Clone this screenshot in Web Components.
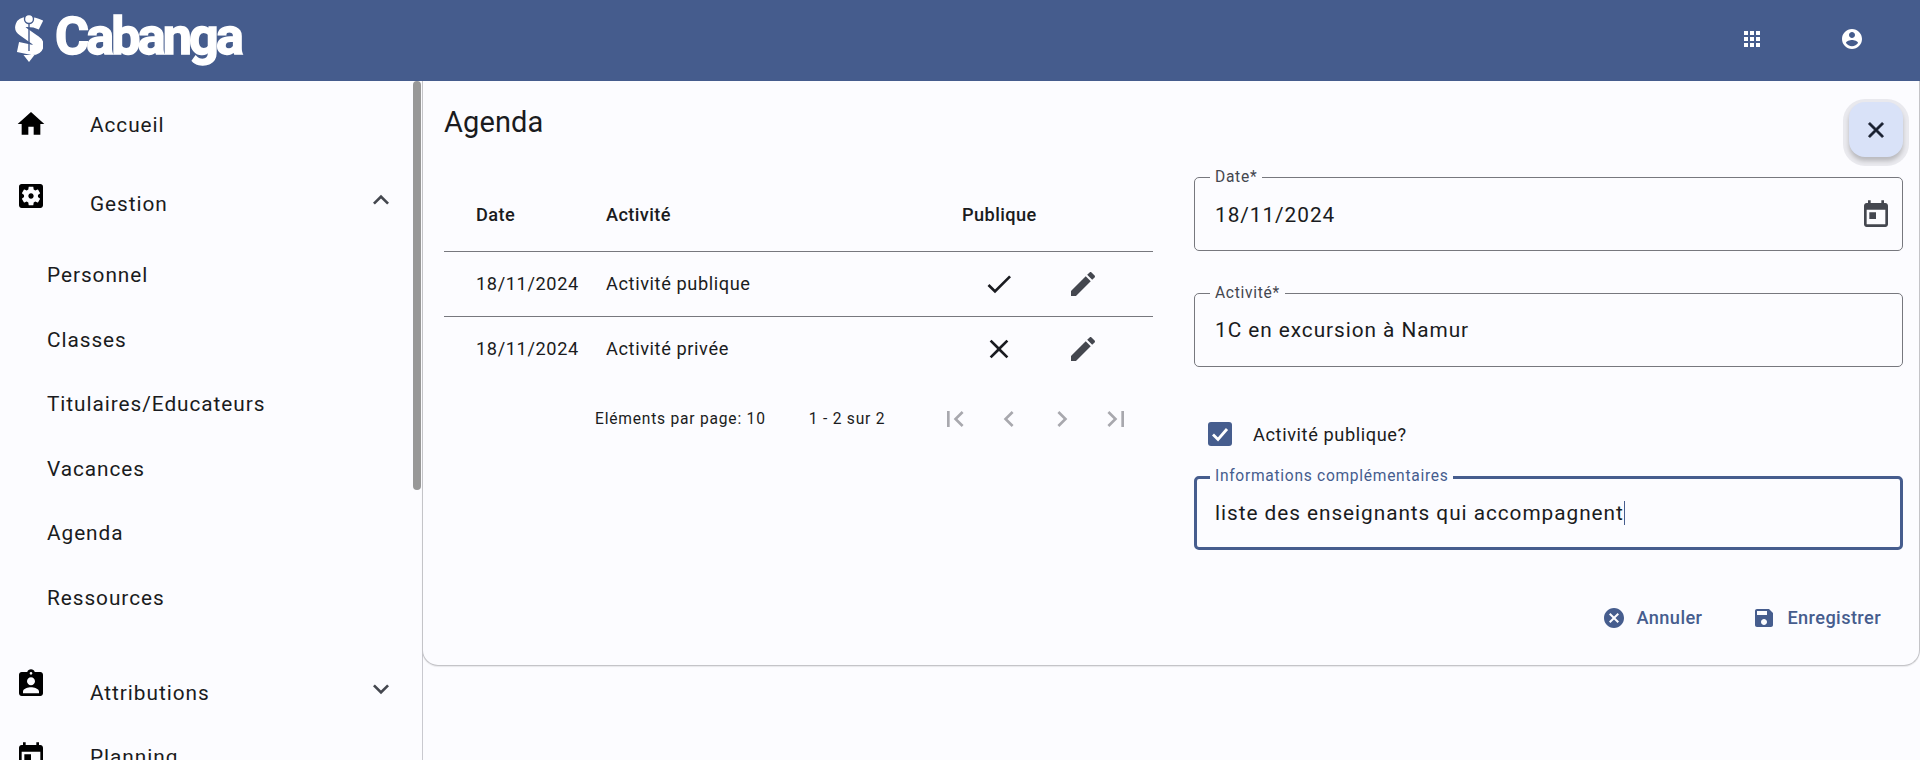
<!DOCTYPE html>
<html lang="fr">
<head>
<meta charset="utf-8">
<title>Cabanga - Agenda</title>
<style>
  html, body { margin: 0; height: 100%; overflow: hidden; background: #fcfcff; }
  body { font-family: Roboto, "Liberation Sans", sans-serif; color: #1a1b20; display: flex; flex-direction: column; }
  .main { flex: 1; display: flex; min-height: 0; }
</style>
</head>
<body>
<app-header></app-header>
<div class="main">
  <side-nav>
    <nav-item label="Accueil" icon="home" style="margin-top:12px" icon-shift="-1"></nav-item>
    <nav-item label="Gestion" icon="settings" chevron="less" style="margin-top:15px" icon-shift="-8"></nav-item>
    <nav-item label="Personnel" sub style="margin-top:7px"></nav-item>
    <nav-item label="Classes" sub></nav-item>
    <nav-item label="Titulaires/Educateurs" sub></nav-item>
    <nav-item label="Vacances" sub></nav-item>
    <nav-item label="Agenda" sub></nav-item>
    <nav-item label="Ressources" sub></nav-item>
    <nav-item label="Attributions" icon="badge" chevron="more" style="margin-top:31px" icon-shift="-9"></nav-item>
    <nav-item label="Planning" icon="today"></nav-item>
  </side-nav>
  <agenda-card>
    <agenda-table slot="left"></agenda-table>
    <agenda-form slot="right"></agenda-form>
  </agenda-card>
</div>

<script>
const ICONS = {
    home: 'M10 20v-6h4v6h5v-8h3L12 3 2 12h3v8z',
    settings: 'M12 10c-1.1 0-2 .9-2 2s.9 2 2 2 2-.9 2-2-.9-2-2-2zm7-7H5c-1.11 0-2 .89-2 2v14c0 1.11.89 2 2 2h14c1.11 0 2-.89 2-2V5c0-1.11-.89-2-2-2zm-1.75 9c0 .23-.02.46-.05.68l1.48 1.16c.13.11.17.3.08.45l-1.4 2.42c-.09.15-.27.21-.43.15l-1.74-.7c-.36.28-.76.51-1.18.69l-.26 1.85c-.03.17-.18.3-.35.3h-2.8c-.17 0-.32-.13-.35-.29l-.26-1.85c-.43-.18-.82-.41-1.18-.69l-1.74.7c-.16.06-.34 0-.43-.15l-1.4-2.42c-.09-.15-.05-.34.08-.45l1.48-1.16c-.03-.23-.05-.46-.05-.69 0-.23.02-.46.05-.68l-1.48-1.16c-.13-.11-.17-.3-.08-.45l1.4-2.42c.09-.15.27-.21.43-.15l1.74.7c.36-.28.76-.51 1.18-.69l.26-1.85c.03-.17.18-.3.35-.3h2.8c.17 0 .32.13.35.29l.26 1.85c.43.18.82.41 1.18.69l1.74-.7c.16-.06.34 0 .43.15l1.4 2.42c.09.15.05.34-.08.45l-1.48 1.16c.03.23.05.46.05.69z',
    badge: 'M19 3h-4.18C14.4 1.84 13.3 1 12 1c-1.3 0-2.4.84-2.82 2H5c-1.1 0-2 .9-2 2v14c0 1.1.9 2 2 2h14c1.1 0 2-.9 2-2V5c0-1.1-.9-2-2-2zm-7 0c.55 0 1 .45 1 1s-.45 1-1 1-1-.45-1-1 .45-1 1-1zm0 4c1.66 0 3 1.34 3 3s-1.34 3-3 3-3-1.34-3-3 1.34-3 3-3zm6 12H6v-1.4c0-2 4-3.1 6-3.1s6 1.1 6 3.1V19z',
    today: 'M19 3h-1V1h-2v2H8V1H6v2H5c-1.11 0-1.99.9-1.99 2L3 19c0 1.1.89 2 2 2h14c1.1 0 2-.9 2-2V5c0-1.1-.9-2-2-2zm0 16H5V8h14v11zM7 10h5v5H7z',
    apps: 'M4 8h4V4H4v4zm6 12h4v-4h-4v4zm-6 0h4v-4H4v4zm0-6h4v-4H4v4zm6 0h4v-4h-4v4zm6-10v4h4V4h-4zm-6 4h4V4h-4v4zm6 6h4v-4h-4v4zm0 6h4v-4h-4v4z',
    account: 'M12 2C6.48 2 2 6.48 2 12s4.48 10 10 10 10-4.48 10-10S17.52 2 12 2zm0 3c1.66 0 3 1.34 3 3s-1.34 3-3 3-3-1.34-3-3 1.34-3 3-3zm0 14.2c-2.5 0-4.71-1.28-6-3.22.03-1.99 4-3.08 6-3.08 1.99 0 5.97 1.09 6 3.08-1.29 1.94-3.5 3.22-6 3.22z',
    close: 'M19 6.41 17.59 5 12 10.59 6.41 5 5 6.41 10.59 12 5 17.59 6.41 19 12 13.41 17.59 19 19 17.59 13.41 12z',
    check: 'M9 16.17 4.83 12l-1.42 1.41L9 19 21 7l-1.41-1.41z',
    edit: 'M3 17.25V21h3.75L17.81 9.94l-3.75-3.75L3 17.25zM20.71 7.04c.39-.39.39-1.02 0-1.41l-2.34-2.34c-.39-.39-1.02-.39-1.41 0l-1.83 1.83 3.75 3.75 1.83-1.83z',
    less: 'M12 8l-6 6 1.41 1.41L12 10.83l4.59 4.58L18 14z',
    more: 'M16.59 8.59 12 13.17 7.41 8.59 6 10l6 6 6-6z',
    first: 'M18.41 16.59 13.82 12l4.59-4.59L17 6l-6 6 6 6zM6 6h2v12H6z',
    last: 'M5.59 7.41 10.18 12l-4.59 4.59L7 18l6-6-6-6zM16 6h2v12h-2z',
    prev: 'M15.41 7.41 14 6l-6 6 6 6 1.41-1.41L10.83 12z',
    next: 'M10 6 8.59 7.41 13.17 12l-4.58 4.59L10 18l6-6z',
    cancel: 'M12 2C6.47 2 2 6.47 2 12s4.47 10 10 10 10-4.47 10-10S17.53 2 12 2zm5 13.59L15.59 17 12 13.41 8.41 17 7 15.59 10.59 12 7 8.41 8.41 7 12 10.59 15.59 7 17 8.41 13.41 12 17 15.59z',
    save: 'M17 3H5c-1.11 0-2 .9-2 2v14c0 1.1.89 2 2 2h14c1.1 0 2-.9 2-2V7l-4-4zm-5 16c-1.66 0-3-1.34-3-3s1.34-3 3-3 3 1.34 3 3-1.34 3-3 3zm3-10H5V5h10v4z'
};

class MdIcon extends HTMLElement {
    constructor() {
        super();
        this.attachShadow({ mode: 'open' });
    }

    connectedCallback() {
        const size = this.getAttribute('size') || '32';
        const path = ICONS[this.getAttribute('name')] || '';
        const stroke = this.getAttribute('stroke') || '0';
        this.shadowRoot.innerHTML = `
            <style>
                :host { display: inline-flex; flex: none; width: ${size}px; height: ${size}px; color: inherit; }
                svg { width: 100%; height: 100%; display: block; fill: currentColor; stroke: currentColor; stroke-width: ${stroke}; }
            </style>
            <svg viewBox="0 0 24 24"><path d="${path}"></path></svg>
        `;
    }
}

class AppHeader extends HTMLElement {
    constructor() {
        super();
        this.attachShadow({ mode: 'open' });
        this.shadowRoot.innerHTML = `
            <style>
                :host {
                    display: flex;
                    align-items: center;
                    flex: none;
                    height: 81px;
                    box-sizing: border-box;
                    padding: 0 56px 0 15px;
                    background: #455c8d;
                    color: #fff;
                }
                .logo-mark { width: 28px; height: 47px; display: block; flex: none; margin-bottom: 4px; }
                .brand {
                    font-family: Roboto, sans-serif;
                    font-weight: 700;
                    font-size: 52px;
                    line-height: 60px;
                    letter-spacing: -2.8px;
                    margin: 0 0 7px 12px;
                    -webkit-text-stroke: 1.5px #fff;
                }
                .actions { margin-left: auto; display: flex; gap: 76px; margin-bottom: 3px; }
            </style>
            <svg class="logo-mark" viewBox="0 0 28 47">
                <path d="M26 10 C22 8 17 7 12 7 C5 7 3 13 8 16.5 L20 25 C26 29 24 35 17 35 L3 32" fill="none" stroke="#fff" stroke-width="10"></path>
                <path d="M14 8 V36" stroke="#455c8d" stroke-width="1.4"></path>
                <circle cx="14" cy="4" r="5.2" fill="#455c8d"></circle>
                <circle cx="14" cy="4" r="3.8" fill="#fff"></circle>
                <path d="M8.5 40 H19.5 L14 47z" fill="#fff"></path>
            </svg>
            <span class="brand">Cabanga</span>
            <div class="actions">
                <md-icon name="apps" size="24"></md-icon>
                <md-icon name="account" size="24"></md-icon>
            </div>
        `;
    }
}

class SideNav extends HTMLElement {
    constructor() {
        super();
        this.attachShadow({ mode: 'open' });
        this.shadowRoot.innerHTML = `
            <style>
                :host {
                    display: flex;
                    flex-direction: column;
                    flex: none;
                    position: relative;
                    width: 423px;
                    box-sizing: border-box;
                    padding-right: 10px;
                    border-right: 1px solid #c9c9cf;
                    overflow: hidden;
                }
                .thumb {
                    position: absolute;
                    top: 0;
                    right: 1px;
                    width: 8px;
                    height: 409px;
                    border-radius: 4px;
                    background: #989898;
                }
            </style>
            <slot></slot>
            <div class="thumb"></div>
        `;
    }
}

class NavItem extends HTMLElement {
    constructor() {
        super();
        this.attachShadow({ mode: 'open' });
    }

    connectedCallback() {
        const label = this.getAttribute('label');
        const icon = this.getAttribute('icon');
        const chevron = this.getAttribute('chevron');
        const shift = this.getAttribute('icon-shift') || '0';
        const isSub = this.hasAttribute('sub');
        this.shadowRoot.innerHTML = `
            <style>
                :host {
                    display: flex;
                    flex: none;
                    align-items: center;
                    height: ${isSub ? 64.5 : 64}px;
                    padding: 0 15px 0 ${isSub ? 47 : 15}px;
                    font-size: 20.8px;
                    letter-spacing: 0.95px;
                    color: #1a1b20;
                }
                md-icon.lead { color: #000; margin-right: 43px; transform: translateY(${shift}px); }
                md-icon.chev { color: #44474f; margin-left: auto; transform: translateY(-4px); }
            </style>
            ${icon ? `<md-icon class="lead" name="${icon}"></md-icon>` : ''}
            <span>${label}</span>
            ${chevron ? `<md-icon class="chev" name="${chevron}"></md-icon>` : ''}
        `;
    }
}

class AgendaCard extends HTMLElement {
    constructor() {
        super();
        this.attachShadow({ mode: 'open' });
        this.shadowRoot.innerHTML = `
            <style>
                :host { display: block; flex: 1; min-width: 0; position: relative; }
                .card {
                    display: grid;
                    grid-template-columns: 709px 709px;
                    column-gap: 41px;
                    box-sizing: border-box;
                    height: 585px;
                    margin-left: -1px;
                    padding: 0 17px 0 21px;
                    border: 1px solid #c4c4c8;
                    border-top: none;
                    border-radius: 0 0 16px 16px;
                    box-shadow: 0 1px 1px rgba(0,0,0,.08);
                }
                h1 {
                    margin: 0;
                    font-size: 29px;
                    font-weight: 400;
                    line-height: 36px;
                    letter-spacing: 0.1px;
                    padding-top: 23px;
                    color: #1a1b20;
                }
                .left { display: flex; flex-direction: column; }
                .fab {
                    position: absolute;
                    top: 21px;
                    right: 17px;
                    width: 54px;
                    height: 55px;
                    display: flex;
                    align-items: center;
                    justify-content: center;
                    border-radius: 16px;
                    background: #d9e2f8;
                    color: #151c2c;
                    box-shadow: 0 4px 4px rgba(0,0,0,.2), 0 3px 0 6px #e9e9ee;
                }
            </style>
            <div class="card">
                <div class="left">
                    <h1>Agenda</h1>
                    <slot name="left"></slot>
                </div>
                <slot name="right"></slot>
            </div>
            <div class="fab"><md-icon name="close" size="26" stroke="0.7"></md-icon></div>
        `;
    }
}

const ROWS = [
    { date: '18/11/2024', label: 'Activité publique', icon: 'check' },
    { date: '18/11/2024', label: 'Activité privée', icon: 'close' }
];

class AgendaTable extends HTMLElement {
    constructor() {
        super();
        this.attachShadow({ mode: 'open' });
        const rows = ROWS.map((row) => `
            <div class="row body">
                <div class="cell first">${row.date}</div>
                <div class="cell">${row.label}</div>
                <div class="cell center"><md-icon name="${row.icon}" style="color:#1a1b20"></md-icon></div>
                <div class="cell center"><md-icon name="edit" style="color:#44474f"></md-icon></div>
            </div>
        `).join('');
        this.shadowRoot.innerHTML = `
            <style>
                :host { display: block; margin-top: 37px; font-size: 18.2px; letter-spacing: 0.6px; color: #1a1b20; }
                .row {
                    display: grid;
                    grid-template-columns: 162px 356px 74px 93px 1fr;
                    align-items: center;
                    height: 64px;
                    padding-bottom: 1px;
                    box-sizing: border-box;
                }
                .row.head { height: 75px; padding: 0; font-weight: 500; letter-spacing: 0.4px; border-bottom: 1px solid #77787e; }
                .row.body + .row.body { border-top: 1px solid #77787e; height: 65px; }
                .first { padding-left: 32px; }
                .center { display: flex; justify-content: center; }
                .paginator {
                    display: flex;
                    align-items: center;
                    height: 75px;
                    padding-left: 151px;
                    font-size: 15.6px;
                    letter-spacing: 0.78px;
                }
                .range { margin-left: 43px; }
                .pages { display: flex; gap: 21.5px; margin-left: 54px; color: #a8a8ae; }
            </style>
            <div class="row head">
                <div class="cell first">Date</div>
                <div class="cell">Activité</div>
                <div class="cell">Publique</div>
            </div>
            ${rows}
            <div class="paginator">
                <span>Eléments par page: 10</span>
                <span class="range">1 - 2 sur 2</span>
                <div class="pages">
                    <md-icon name="first"></md-icon>
                    <md-icon name="prev"></md-icon>
                    <md-icon name="next"></md-icon>
                    <md-icon name="last"></md-icon>
                </div>
            </div>
        `;
    }
}

class OutlinedField extends HTMLElement {
    constructor() {
        super();
        this.attachShadow({ mode: 'open' });
    }

    connectedCallback() {
        const focused = this.hasAttribute('focused');
        this.shadowRoot.innerHTML = `
            <style>
                :host {
                    display: flex;
                    align-items: center;
                    position: relative;
                    box-sizing: border-box;
                    height: 74px;
                    padding: 0 10px 0 ${focused ? 18 : 20}px;
                    border: ${focused ? '3px solid #465d8e' : '1px solid #77787e'};
                    border-radius: 5px;
                    font-size: 20.8px;
                    letter-spacing: 0.95px;
                    color: #1a1b20;
                }
                .label {
                    position: absolute;
                    top: ${focused ? -12 : -10}px;
                    left: ${focused ? 13 : 15}px;
                    padding: 0 5px;
                    background: #fcfcff;
                    font-size: 15.6px;
                    line-height: 18px;
                    letter-spacing: 0.7px;
                    color: ${focused ? '#465d8e' : '#44474f'};
                }
                .value { flex: 1; }
                .caret { border-right: 1px solid #465d8e; }
            </style>
            <span class="label">${this.getAttribute('label')}</span>
            <span class="value"><span class="${focused ? 'caret' : ''}"><slot></slot></span></span>
            <slot name="trailing"></slot>
        `;
    }
}

class AgendaForm extends HTMLElement {
    constructor() {
        super();
        this.attachShadow({ mode: 'open' });
        this.shadowRoot.innerHTML = `
            <style>
                :host { display: flex; flex-direction: column; padding-top: 96px; }
                .check {
                    display: flex;
                    align-items: center;
                    gap: 21px;
                    margin: 55px 0 30px 14px;
                    font-size: 18.2px;
                    letter-spacing: 0.6px;
                }
                .box {
                    width: 24px;
                    height: 24px;
                    display: flex;
                    border-radius: 3px;
                    background: #465d8e;
                }
                .box svg { width: 24px; height: 24px; fill: none; stroke: #fff; stroke-width: 2.8; }
                .actions {
                    display: flex;
                    justify-content: flex-end;
                    gap: 50px;
                    margin-top: 56px;
                    padding-right: 22px;
                    color: #465d8e;
                    font-size: 18.2px;
                    font-weight: 500;
                    letter-spacing: 0.4px;
                }
                .btn { display: flex; align-items: center; gap: 11px; line-height: 24px; }
            </style>
            <outlined-field label="Date*" style="padding-top:2px">18/11/2024<md-icon slot="trailing" name="today" style="color:#44474f"></md-icon></outlined-field>
            <outlined-field label="Activité*" style="margin-top:42px">1C en excursion à Namur</outlined-field>
            <div class="check">
                <span class="box"><svg viewBox="0 0 24 24"><path d="M5 12.5 10 17.5 19 7"></path></svg></span>
                <span>Activité publique?</span>
            </div>
            <outlined-field label="Informations complémentaires" focused>liste des enseignants qui accompagnent</outlined-field>
            <div class="actions">
                <span class="btn"><md-icon name="cancel" size="24"></md-icon>Annuler</span>
                <span class="btn"><md-icon name="save" size="24"></md-icon>Enregistrer</span>
            </div>
        `;
    }
}

customElements.define('md-icon', MdIcon);
customElements.define('app-header', AppHeader);
customElements.define('side-nav', SideNav);
customElements.define('nav-item', NavItem);
customElements.define('agenda-card', AgendaCard);
customElements.define('agenda-table', AgendaTable);
customElements.define('outlined-field', OutlinedField);
customElements.define('agenda-form', AgendaForm);
</script>
</body>
</html>
